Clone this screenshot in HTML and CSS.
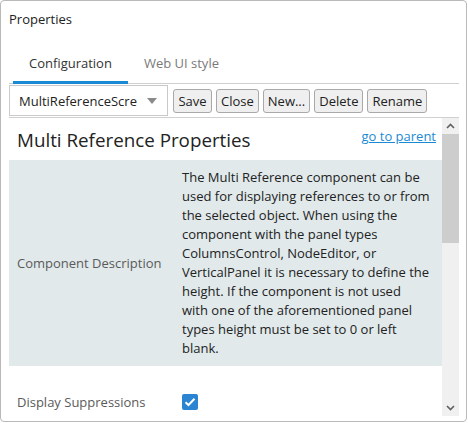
FILE: index.html
```html
<!DOCTYPE html>
<html>
<head>
<meta charset="utf-8">
<link rel="stylesheet" href="styles.css">
</head>
<body>
<div class="window">
  <div class="title">Properties</div>
  <div class="tabs">
    <div class="tab active">Configuration</div>
    <div class="tab">Web UI style</div>
  </div>
  <div class="toolbar">
    <div class="select">
      <span class="select-text">MultiReferenceScre</span>
      <svg class="select-arrow" width="10" height="6" viewBox="0 0 10 6"><path d="M0 0H10L5 6Z" fill="#8a8a8a"/></svg>
    </div>
    <button class="btn">Save</button>
    <button class="btn">Close</button>
    <button class="btn">New...</button>
    <button class="btn">Delete</button>
    <button class="btn">Rename</button>
  </div>
  <div class="panel">
    <div class="content">
      <div class="head">
        <h1 class="heading">Multi Reference Properties</h1>
        <a class="parent-link" href="#">go to parent</a>
      </div>
      <div class="row row-desc">
        <div class="label">Component Description</div>
        <div class="value">The Multi Reference component can be<br>used for displaying references to or from<br>the selected object. When using the<br>component with the panel types<br>ColumnsControl, NodeEditor, or<br>VerticalPanel it is necessary to define the<br>height. If the component is not used<br>with one of the aforementioned panel<br>types height must be set to 0 or left<br>blank.</div>
      </div>
      <div class="row row-check">
        <div class="label">Display Suppressions</div>
        <div class="value">
          <span class="checkbox"><svg width="12" height="10" viewBox="0 0 12 10"><path d="M1.5 5.2L4.5 8L10.5 1.8" fill="none" stroke="#fff" stroke-width="2"/></svg></span>
        </div>
      </div>
    </div>
    <div class="scrollbar">
      <div class="sb-btn"><svg width="9" height="6" viewBox="0 0 9 6"><path d="M1 5L4.5 1.5L8 5" fill="none" stroke="#606060" stroke-width="1.6"/></svg></div>
      <div class="sb-track"><div class="sb-thumb"></div></div>
      <div class="sb-btn"><svg width="9" height="6" viewBox="0 0 9 6"><path d="M1 1L4.5 4.5L8 1" fill="none" stroke="#606060" stroke-width="1.6"/></svg></div>
    </div>
  </div>
</div>
</body>
</html>
```

FILE: styles.css
```css
* { box-sizing: border-box; }
html, body { margin: 0; padding: 0; background: #fff; }
body {
  font-family: "Open Sans", "Noto Sans", sans-serif;
  font-size: 13px;
  color: #222;
}
.window {
  width: 467px;
  height: 422px;
  border: 1px solid #b9b9b9;
  border-radius: 4px;
  padding: 0 7px 5px 8px;
  display: flex;
  flex-direction: column;
  overflow: hidden;
}
.title {
  padding-top: 8px;
  line-height: 20px;
  height: 28px;
  color: #222;
}
.tabs {
  display: flex;
  padding: 24px 0 0 4px;
  border-bottom: 1px solid #cfcfcf;
}
.tab {
  padding: 0 16px 8px 16px;
  line-height: 20px;
  color: #7a7a7a;
  border-bottom: 3px solid transparent;
  margin-bottom: -1px;
}
.tab.active {
  color: #333;
  border-bottom-color: #1a8ad4;
}
.toolbar {
  display: flex;
  align-items: center;
  gap: 4px;
  padding: 1px 0 1px 0;
}
.select {
  width: 159px;
  height: 31px;
  border: 1px solid #c9c9c9;
  display: flex;
  align-items: center;
  justify-content: space-between;
  padding: 0 10px 0 9px;
  margin-right: 1px;
  color: #222;
}
.select-text { white-space: nowrap; overflow: hidden; }
.btn {
  font: inherit;
  color: #222;
  height: 24px;
  min-width: 39px;
  padding: 0 4px;
  background: #efefef;
  border: 1px solid #a9a9a9;
  border-radius: 3px;
  line-height: 20px;
}
.panel {
  flex: 1;
  display: flex;
  border-top: 1px solid #d0d0d0;
  min-height: 0;
}
.content {
  flex: 1;
  overflow: hidden;
}
.head {
  display: flex;
  justify-content: space-between;
  align-items: flex-start;
  padding: 8px 6px 6px 8px;
}
.heading {
  margin: 0;
  font-size: 18.8px;
  font-weight: normal;
  line-height: 28px;
  color: #222;
}
.parent-link {
  margin-top: 1px;
  line-height: 18px;
  color: #1a8ad4;
  text-decoration: underline;
}
.row {
  display: flex;
  align-items: center;
}
.row-desc { background: #e1e9eb; }
.label {
  width: 173px;
  flex: none;
  padding-left: 8px;
  color: #5a5a5a;
}
.value {
  flex: 1;
  padding: 8px 6px 8px 0;
  line-height: 19px;
  white-space: nowrap;
}
.row-check { margin-top: 20px; }
.checkbox {
  display: flex;
  align-items: center;
  justify-content: center;
  width: 16px;
  height: 16px;
  background: #2a84d2;
  border-radius: 2px;
}
.scrollbar {
  width: 17px;
  flex: none;
  background: #f0f0f0;
  display: flex;
  flex-direction: column;
}
.sb-btn {
  height: 16px;
  display: flex;
  align-items: center;
  justify-content: center;
}
.sb-track { flex: 1; }
.sb-thumb {
  height: 109px;
  background: #cdcdcd;
}
```
